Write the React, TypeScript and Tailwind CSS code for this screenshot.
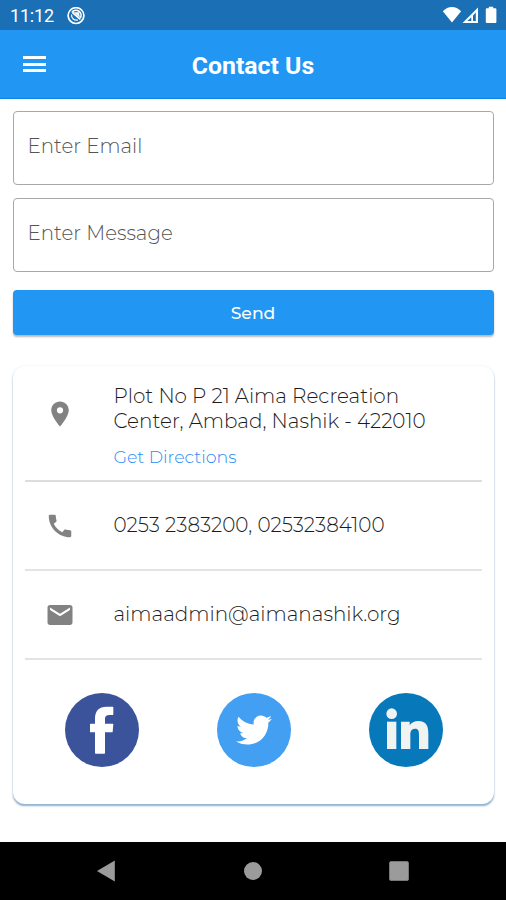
import React from "react";
import { FaTwitter } from "react-icons/fa";
import { MdCall, MdEmail, MdLocationOn } from "react-icons/md";

const StatusBar = () => {
  return (
    <div className="flex h-[30px] items-center justify-between bg-[#1b6fb5] pl-[10px] pr-2 text-white">
      <div className="flex items-center gap-[13px] pt-[2px]">
        <span className="text-[18px] leading-none tracking-[-0.2px]">11:12</span>
        <svg className="size-[18px]" viewBox="0 0 18 18" fill="none" stroke="currentColor">
          <circle cx="9" cy="8.6" r="7.9" strokeWidth="1.7" />
          <path d="M5 5.4a5 5 0 0 1 8.4 5.4" strokeWidth="1.7" />
          <path d="M4.6 7.6a4.8 4.8 0 0 0 6.2 5.3" strokeWidth="1.2" />
          <path d="M5.5 5.6 13.4 12.4" strokeWidth="1.7" />
          <path d="M6.5 5.3h5.5l.9 5.5z" fill="currentColor" stroke="none" />
        </svg>
      </div>
      <svg className="h-[18px] w-[56px]" viewBox="0 0 56 18" fill="currentColor">
        <path d="M.8 5.3C6-.6 13.9-.6 19.1 5.3L10 16.5z" />
        <path
          fillRule="evenodd"
          d="M20.5 17 36 1.5V17zM29.3 11.3V15l-4-.1zM31 9.5V15h2.8V6.4z"
        />
        <path d="M46.8.8h4.4v1.5h2.2q1 0 1 1V16q0 1-1 1h-8.6q-1 0-1-1V3.3q0-1 1-1h2z" />
      </svg>
    </div>
  );
};

const Field = ({ placeholder }: { placeholder: string }) => {
  return (
    <input
      className="h-[74px] w-full rounded-[4px] border-[1.5px] border-[#a8a8a8] px-[14px] pb-[4px] text-[19.8px] font-light text-[#444] placeholder:text-[#555]"
      placeholder={placeholder}
    />
  );
};

const ContactRow = ({
  icon,
  children,
}: {
  icon: React.ReactNode;
  children: React.ReactNode;
}) => {
  return (
    <div className="flex h-[89px] items-center border-b-2 border-[#e2e3e4] text-[#828282]">
      <div className="flex w-[70px] justify-center">{icon}</div>
      <div className="ml-[19px] text-[19.95px] font-light text-[#1c1c1c]">{children}</div>
    </div>
  );
};

const FacebookLogo = () => {
  return (
    <svg className="size-[74px]" viewBox="0 0 222 222">
      <circle cx="111" cy="111" r="111" fill="#3a539b" />
      <path
        d="M90 180V118H77q-2 0-2-2V94q0-2 2-2h13V76q0-34 35-35h18q2 0 2 2v21q0 2-2 2h-10q-13 0-13 11v15h23q2 0 2 2l-2 22q0 2-2 2h-21v62q0 2-2 2H92q-2 0-2-2z"
        fill="#fff"
      />
    </svg>
  );
};

const LinkedinLogo = () => {
  return (
    <svg className="size-[74px]" viewBox="0 0 222 222">
      <circle cx="111" cy="111" r="111" fill="#0779bb" />
      <g fill="#f1f2f2">
        <circle cx="68" cy="62" r="16" />
        <path d="M54 86h28v82H54z" />
        <path d="M96 86h26v11c5-8 14-13 26-13 24 0 30 15 30 38v46h-28v-41c0-12-1-20-12-20-12 0-14 9-14 20v41H96z" />
      </g>
    </svg>
  );
};

const NavBar = () => {
  return (
    <div className="grid h-[58px] grid-cols-[1fr_18px_1fr] items-center bg-black px-[96px]">
      <svg className="h-[22px] w-[20px] text-[#9b9b9b]" viewBox="0 0 20 22" fill="currentColor">
        <path d="M1 11 18.8.5v21z" />
      </svg>
      <div className="size-[18px] rounded-full bg-[#9b9b9b]" />
      <div className="mr-[1px] size-[20px] justify-self-end rounded-[2px] border border-[#777] bg-[#9b9b9b]" />
    </div>
  );
};

export default function App() {
  return (
    <div className="flex h-[900px] w-[506px] flex-col bg-white font-['Roboto',sans-serif]">
      <StatusBar />
      <header className="grid h-[69px] grid-cols-[70px_1fr_70px] items-center border-b border-[#0d85e5] bg-[#2196f3] text-white">
        <div className="ml-[23px] flex w-[23px] flex-col gap-[3.5px]">
          <span className="h-[3px] bg-white" />
          <span className="h-[3px] bg-white" />
          <span className="h-[3px] bg-white" />
        </div>
        <h1 className="pt-[5px] text-center text-[24.8px] font-bold leading-none">Contact Us</h1>
      </header>

      <main className="flex flex-1 flex-col px-[12.5px] pt-[12px] font-['Montserrat','Inter',sans-serif]">
        <div className="flex flex-col gap-[12.5px]">
          <Field placeholder="Enter Email" />
          <Field placeholder="Enter Message" />
        </div>
        <button className="mt-[18.5px] h-[45px] shrink-0 rounded-[4px] bg-[#2196f3] pt-px text-[17.2px] font-medium text-white shadow-[0_2px_2px_rgba(0,0,0,0.28)]">
          Send
        </button>

        <section className="mt-[31px] h-[438px] rounded-[12px] px-[12px] shadow-[0_2px_2px_-0.5px_#8fb0d0,0_0_2px_rgba(120,150,160,0.2)]">
          <div className="flex h-[116px] border-b-2 border-[#dcdddd]">
            <div className="flex w-[70px] justify-center pt-[33px] text-[#828282]">
              <MdLocationOn className="size-[30px]" />
            </div>
            <div className="ml-[19px] pt-[18px] font-light text-[#1c1c1c]">
              <p className="whitespace-nowrap text-[19.95px] leading-[24.5px]">
                Plot No P 21 Aima Recreation
                <br />
                Center, Ambad, Nashik - 422010
              </p>
              <a className="mt-[12px] block text-[17.4px] leading-[24px] text-[#2a8df5]">
                Get Directions
              </a>
            </div>
          </div>
          <ContactRow icon={<MdCall className="size-[30px]" />}>
            0253 2383200, 02532384100
          </ContactRow>
          <ContactRow icon={<MdEmail className="size-[30px]" />}>
            aimaadmin@aimanashik.org
          </ContactRow>
          <div className="flex justify-between pl-[40px] pr-[39px] pt-[33px] text-white">
            <a>
              <FacebookLogo />
            </a>
            <a className="flex size-[74px] items-center justify-center rounded-full bg-[#429ff2]">
              <FaTwitter className="size-[36px]" />
            </a>
            <a>
              <LinkedinLogo />
            </a>
          </div>
        </section>
      </main>

      <NavBar />
    </div>
  );
}
